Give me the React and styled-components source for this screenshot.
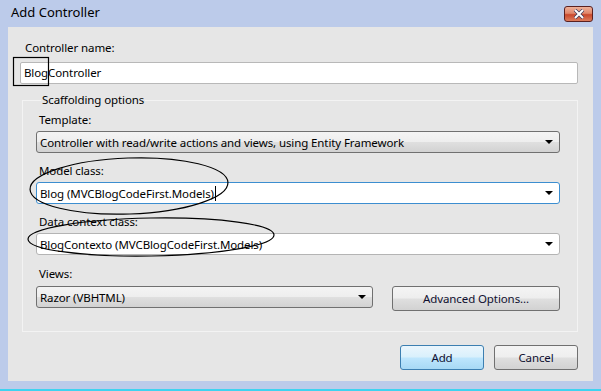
import React from 'react'
import styled, { createGlobalStyle } from 'styled-components'

const Global = createGlobalStyle`
  html, body {
    margin: 0;
    padding: 0;
    background: #fff;
  }
  body {
    font-family: "Noto Sans", "Open Sans", sans-serif;
    font-size: 11.5px;
    letter-spacing: -0.1px;
    color: #000;
  }
`

const Window = styled.div`
  position: relative;
  width: 601px;
  height: 391px;
  box-sizing: border-box;
  background: #bccbea;
  display: flex;
  flex-direction: column;
  padding: 0 8px 8px 8px;
  border-bottom: 2px solid #3fd3f0;
  overflow: hidden;
`

const TitleBar = styled.div`
  height: 27px;
  display: flex;
  align-items: center;
  justify-content: space-between;
  padding: 0 0 4px 3px;
  box-sizing: border-box;
  font-size: 13px;
  letter-spacing: 0;
  color: #000;
`

const CloseButton = styled.div`
  width: 27px;
  height: 14px;
  border: 1px solid #5a2020;
  border-radius: 3px;
  background: linear-gradient(#eeb09a, #e0866a 45%, #c9482c 55%, #dc7c5c);
  display: flex;
  align-items: center;
  justify-content: center;
  margin-top: 4px;
`

const Client = styled.div`
  flex: 1;
  background: #e6e6e6;
  display: flex;
  flex-direction: column;
  padding: 13px 15px 0 12px;
`

const Label = styled.div`
  height: 16px;
  line-height: 16px;
  padding-left: ${p => p.indent || 3}px;
  margin-top: ${p => p.top || 0}px;
  margin-bottom: ${p => p.bottom || 3}px;
`

const TextBox = styled.div`
  height: 22px;
  box-sizing: border-box;
  margin-top: 3px;
  border: 1px solid #b8b8b8;
  border-radius: 2px;
  background: #fff;
  padding-left: 3px;
  line-height: 20px;
`

const Group = styled.fieldset`
  margin: 8px 0 0 2px;
  padding: 4px 17px 20px 13px;
  border: 1px solid #f3f3f3;
  min-width: 0;
`

const Legend = styled.legend`
  padding: 0 1px;
  margin-left: 5px;
  line-height: 16px;
`

const Combo = styled.div`
  height: 22px;
  box-sizing: border-box;
  border-radius: 3px;
  border: 1px solid ${p => (p.focused ? '#3c8ed0' : p.editable ? '#b4b4b4' : '#707070')};
  background: ${p =>
    p.editable ? '#fff' : 'linear-gradient(#f4f4f4 0%, #eeeeee 48%, #dfdfdf 52%, #d2d2d2 100%)'};
  display: flex;
  align-items: center;
  justify-content: space-between;
  padding: 0 6px 0 3px;
  width: ${p => (p.width ? `${p.width}px` : 'auto')};
  flex: ${p => (p.width ? 'none' : '1')};
`

const ComboText = styled.span`
  white-space: nowrap;
  display: flex;
  align-items: center;
`

const Caret = styled.span`
  display: inline-block;
  width: 1px;
  height: 15px;
  background: #000;
  margin-left: 1px;
`

const Arrow = styled.span`
  width: 0;
  height: 0;
  border-left: 4px solid transparent;
  border-right: 4px solid transparent;
  border-top: 4px solid #000;
`

const Row = styled.div`
  display: flex;
  align-items: flex-start;
  gap: 19px;
`

const Button = styled.div`
  height: 25px;
  width: ${p => p.width}px;
  box-sizing: border-box;
  border-radius: 3px;
  border: 1px solid ${p => (p.primary ? '#3c7fb1' : '#707070')};
  background: ${p =>
    p.primary
      ? 'linear-gradient(#eaf6fd 0%, #d9f0fc 48%, #bee6fd 52%, #a7d9f5 100%)'
      : 'linear-gradient(#f4f4f4 0%, #eeeeee 48%, #dfdfdf 52%, #d2d2d2 100%)'};
  display: flex;
  align-items: center;
  justify-content: center;
  color: #101030;
`

const Footer = styled.div`
  display: flex;
  justify-content: flex-end;
  gap: 10px;
  margin-top: 13px;
`

const Annotations = styled.svg`
  position: absolute;
  left: 0;
  top: 0;
  pointer-events: none;
`

export default function App() {
  return (
    <>
      <Global />
      <Window>
        <TitleBar>
          <span>Add Controller</span>
          <CloseButton>
            <svg width="12" height="10" viewBox="0 0 12 10">
              <path d="M2 1 L10 9 M10 1 L2 9" stroke="#3a3a5a" strokeWidth="3.4" />
              <path d="M2 1 L10 9 M10 1 L2 9" stroke="#fff" strokeWidth="2" />
            </svg>
          </CloseButton>
        </TitleBar>
        <Client>
          <Label indent={5} bottom={3}>Controller name:</Label>
          <TextBox>BlogController</TextBox>
          <Group>
            <Legend>Scaffolding options</Legend>
            <Label>Template:</Label>
            <Combo>
              <ComboText>Controller with read/write actions and views, using Entity Framework</ComboText>
              <Arrow />
            </Combo>
            <Label top={10}>Model class:</Label>
            <Combo editable focused>
              <ComboText>
                Blog (MVCBlogCodeFirst.Models)
                <Caret />
              </ComboText>
              <Arrow />
            </Combo>
            <Label top={10}>Data context class:</Label>
            <Combo editable>
              <ComboText>BlogContexto (MVCBlogCodeFirst.Models)</ComboText>
              <Arrow />
            </Combo>
            <Label top={11} bottom={4}>Views:</Label>
            <Row>
              <Combo width={337}>
                <ComboText>Razor (VBHTML)</ComboText>
                <Arrow />
              </Combo>
              <Button width={168}>Advanced Options...</Button>
            </Row>
          </Group>
          <Footer>
            <Button primary width={84}>Add</Button>
            <Button width={84}>Cancel</Button>
          </Footer>
        </Client>
        <Annotations width="601" height="391">
          <rect x="13.5" y="57.5" width="35" height="28" fill="none" stroke="#000" strokeWidth="1.2" />
          <ellipse cx="129" cy="186" rx="99" ry="28" fill="none" stroke="#000" strokeWidth="1.2" transform="rotate(-2 129 186)" />
          <ellipse cx="151" cy="237" rx="123" ry="19" fill="none" stroke="#000" strokeWidth="1.2" transform="rotate(-1 151 237)" />
        </Annotations>
      </Window>
    </>
  )
}
